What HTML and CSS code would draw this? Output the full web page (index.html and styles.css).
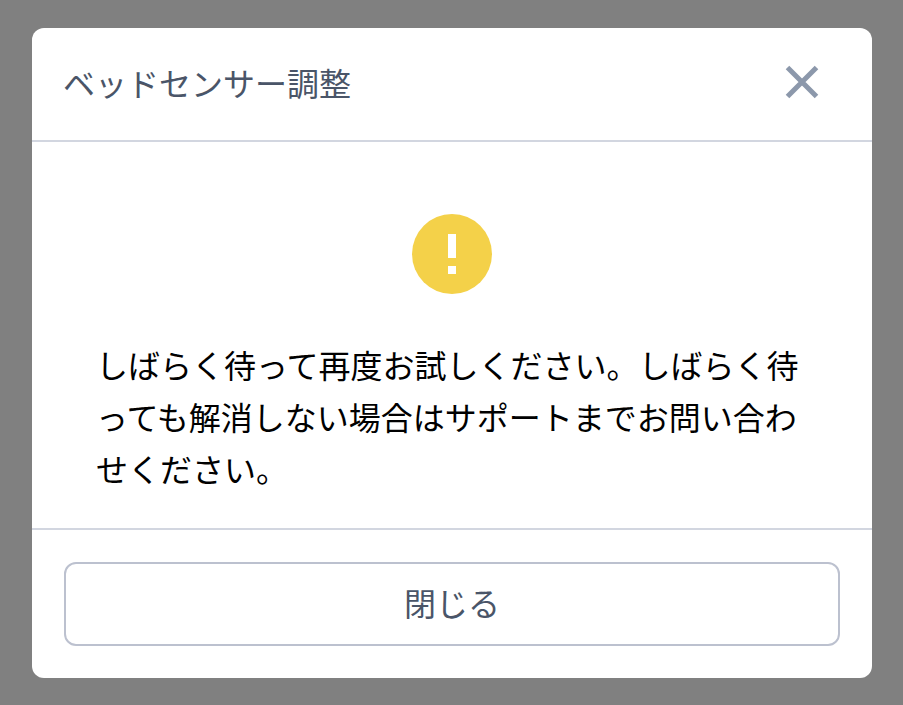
FILE: index.html
```html
<!DOCTYPE html>
<html lang="ja">
<head>
    <meta charset="UTF-8">
    <meta name="viewport" content="width=device-width, initial-scale=1.0">
    <title>ベッドセンサー調整</title>
    <link rel="stylesheet" href="styles.css">
</head>
<body>
    <div class="modal">
        <div class="modal-header">
            <h1 class="modal-title">ベッドセンサー調整</h1>
            <button class="close-button" aria-label="閉じる">
                <svg width="34" height="34" viewBox="0 0 34 34">
                    <path d="M2.5 2.5L31.5 31.5M31.5 2.5L2.5 31.5" stroke="#8c98ab" stroke-width="5" fill="none"/>
                </svg>
            </button>
        </div>
        <div class="modal-body">
            <svg class="warning-icon" width="80" height="80" viewBox="0 0 80 80">
                <circle cx="40" cy="40" r="40" fill="#f4d149"/>
                <rect x="36" y="20" width="8" height="24" fill="#fff"/>
                <rect x="36" y="52" width="8" height="8" fill="#fff"/>
            </svg>
            <p class="message">しばらく待って再度お試しください。しばらく待っても解消しない場合はサポートまでお問い合わせください。</p>
        </div>
        <div class="modal-footer">
            <button class="footer-button">閉じる</button>
        </div>
    </div>
</body>
</html>
```

FILE: styles.css
```css
html, body {
    height: 100%;
}

body {
    margin: 0;
    background: #808080;
    font-family: "Liberation Sans", "Noto Sans CJK JP", sans-serif;
    padding: 28px 31px 27px 32px;
    box-sizing: border-box;
    overflow: hidden;
}

.modal {
    background: white;
    border-radius: 12px;
    height: 650px;
    display: flex;
    flex-direction: column;
}

.modal-header {
    height: 112px;
    padding: 0 53px 0 31px;
    border-bottom: 2px solid #d2d6e0;
    display: flex;
    align-items: center;
    justify-content: space-between;
}

.modal-title {
    margin: 0 0 5px;
    font-size: 32px;
    font-weight: 400;
    color: #4a5568;
}

.close-button {
    background: none;
    border: none;
    padding: 0;
    margin-bottom: 4px;
    display: flex;
}

.modal-body {
    height: 386px;
    padding: 72px 64px 0;
    box-sizing: border-box;
    display: flex;
    flex-direction: column;
    align-items: center;
}

.warning-icon {
    flex-shrink: 0;
}

.message {
    margin: 47px 0 0;
    width: 100%;
    font-size: 32px;
    line-height: 52px;
    color: #000;
}

.modal-footer {
    border-top: 2px solid #d2d6e0;
    padding: 32px;
}

.footer-button {
    display: block;
    width: 100%;
    height: 84px;
    padding: 0 0 4px;
    background: white;
    border: 2px solid #bcc1cf;
    border-radius: 12px;
    font-family: inherit;
    font-size: 32px;
    color: #4a5568;
}
```
